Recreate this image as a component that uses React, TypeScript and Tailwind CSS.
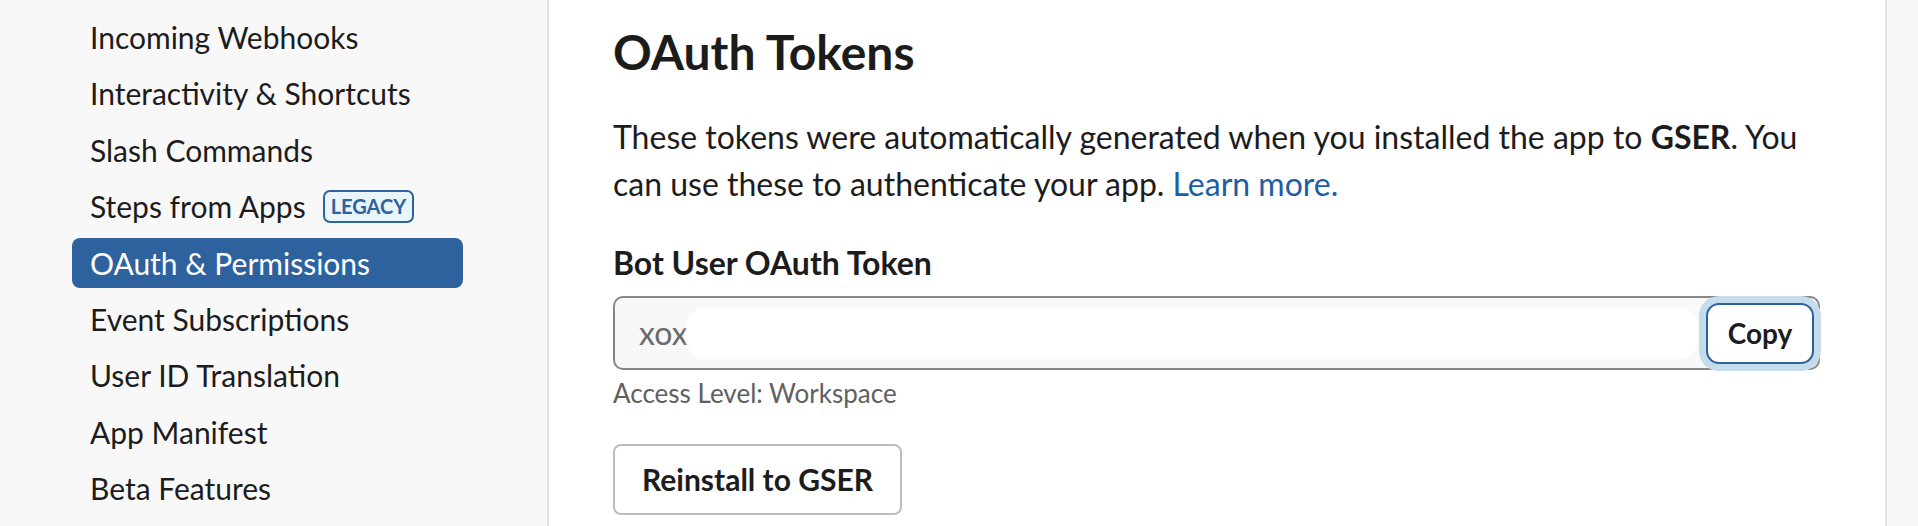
import React from "react";

const items = [
  "Incoming Webhooks",
  "Interactivity & Shortcuts",
  "Slash Commands",
  "Steps from Apps",
  "OAuth & Permissions",
  "Event Subscriptions",
  "User ID Translation",
  "App Manifest",
  "Beta Features",
];

export default function App() {
  return (
    <div
      className="flex h-[526px] w-[1918px] overflow-hidden bg-white text-[#1d1c1d]"
      style={{ fontFamily: "Lato, 'Noto Sans', sans-serif" }}
    >
      <aside className="w-[549px] shrink-0 bg-[#f8f8f8] border-r-2 border-[#e3e3e3] pl-[72px] pt-[12px]">
        <nav className="flex flex-col gap-[6.4px]">
          {items.map((it) => {
            const active = it === "OAuth & Permissions";
            return (
              <div
                key={it}
                className={
                  active
                    ? "flex h-[50px] w-[391px] items-center rounded-[8px] bg-[#2e629e] px-[18px] text-[30px] leading-[36px] text-white"
                    : "flex h-[50px] w-[391px] items-center rounded-[8px] px-[18px] text-[30px] leading-[36px] text-[#1d1c1d]"
                }
              >
                <span>{it}</span>
                {it === "Steps from Apps" && (
                  <span className="ml-[17px] flex h-[33px] items-center rounded-[7px] border-2 border-[#2e629e] bg-[#e8f5fa] px-[6px] text-[20px] font-bold leading-none text-[#2e629e]">
                    LEGACY
                  </span>
                )}
              </div>
            );
          })}
        </nav>
      </aside>

      <main className="flex-1 bg-white pl-[64px] pr-[65px] pt-[22px]">
        <h2 className="text-[48px] font-bold leading-[60px] text-[#1d1c1d]">OAuth Tokens</h2>
        <p className="mt-[31px] text-[32px] leading-[47px] text-[#1d1c1d]">
          These tokens were automatically generated when you installed the app to <b>GSER</b>. You can use these to authenticate your app. <a className="text-[#1d5ea3]">Learn more.</a>
        </p>
        <h4 className="mt-[38px] text-[32px] font-bold leading-[36px] text-[#1d1c1d]">Bot User OAuth Token</h4>
        <div className="mt-[15px] flex h-[74px] items-center rounded-[10px] border-2 border-[#868686] bg-[#f8f8f8] pl-[24px] pr-[4px]">
          <span className="text-[32px] leading-none text-[#6b6a6b]">xox</span>
          <div className="h-[47px] flex-1 rounded-[18px] bg-white shadow-[0_0_3px_2px_#ffffff]" />
          <button className="ml-[9px] flex h-[61px] w-[108px] items-center justify-center rounded-[13px] border-2 border-[#2e629e] bg-white text-[28px] font-bold text-[#1d1c1d] shadow-[0_0_0_7px_#c4dcec]">
            Copy
          </button>
        </div>
        <div className="mt-[8px] text-[26px] leading-[30px] text-[#616061]">Access Level: Workspace</div>
        <button className="mt-[36px] flex h-[71px] items-center rounded-[8px] border-2 border-[#bcbcbc] bg-white px-[27px] text-[30px] font-bold text-[#1d1c1d]">
          Reinstall to GSER
        </button>
      </main>

      <div className="w-[33px] shrink-0 border-l-2 border-[#e3e3e3] bg-[#f8f8f8]" />
    </div>
  );
}
